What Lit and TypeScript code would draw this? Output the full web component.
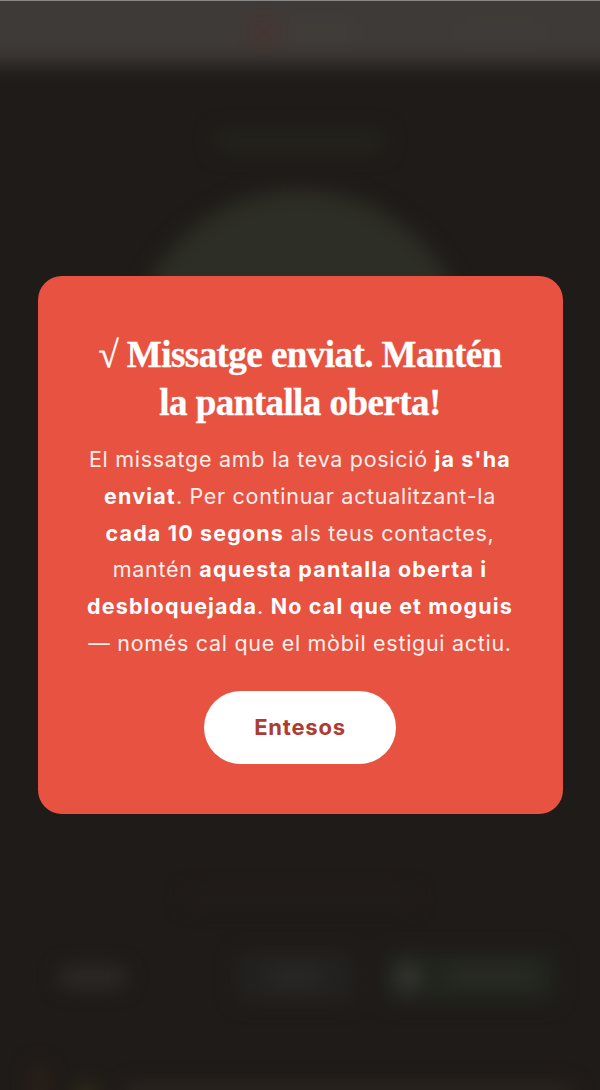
import { LitElement, html, css } from "lit";
import { customElement } from "lit/decorators.js";

@customElement("app-root")
export class AppRoot extends LitElement {
  static styles = css`
    :host {
      display: block;
      position: relative;
      width: 600px;
      height: 1090px;
      overflow: hidden;
      background: #1f1b18;
      font-family: "Inter", "Liberation Sans", sans-serif;
    }
    .backdrop {
      height: 100%;
      display: flex;
      flex-direction: column;
      filter: blur(10px);
    }
    .topbar {
      height: 64px;
      flex: none;
      margin: -20px -30px 0;
      padding: 20px 90px 0 279px;
      background: #3e3a37;
      display: flex;
      align-items: center;
      gap: 6px;
    }
    .logo-dot {
      width: 30px;
      height: 34px;
      border-radius: 50%;
      background: #473533;
    }
    .logo-text {
      width: 70px;
      height: 18px;
      background: #413d39;
    }
    .top-right {
      margin-left: auto;
      width: 80px;
      height: 18px;
      background: #403c38;
    }
    .main {
      flex: 1;
      display: flex;
      flex-direction: column;
      align-items: center;
    }
    .heading {
      margin-top: 66px;
      width: 170px;
      height: 22px;
      border-radius: 4px;
      background: #24231c;
    }
    .dial {
      margin-top: 38px;
      width: 340px;
      height: 340px;
      border-radius: 50%;
      background: #2d2e25;
      flex: none;
    }
    .note {
      margin-top: 362px;
      width: 230px;
      height: 14px;
      background: #211d1a;
    }
    .actions {
      margin-top: 46px;
      box-sizing: border-box;
      width: 100%;
      padding: 0 45px 0 60px;
      display: flex;
      align-items: center;
      gap: 33px;
    }
    .action-label {
      width: 65px;
      height: 20px;
      margin-right: 79px;
      background: #2e2b28;
    }
    .action {
      width: 115px;
      height: 50px;
      background: #232120;
      display: flex;
      align-items: center;
      justify-content: center;
    }
    .action span {
      width: 50px;
      height: 18px;
      background: #2b2926;
    }
    .action.send {
      flex: 1;
      justify-content: flex-start;
      box-sizing: border-box;
      padding-left: 12px;
      background: #21241d;
      gap: 27px;
    }
    .action.send i {
      width: 22px;
      height: 26px;
      border-radius: 50%;
      background: #3a3a35;
    }
    .action.send span {
      width: 90px;
      background: #292c24;
    }
    .footer-row {
      margin-top: 63px;
      align-self: flex-start;
      margin-left: 32px;
      width: 540px;
      display: flex;
      gap: 30px;
      align-items: center;
    }
    .footer-row i {
      width: 14px;
      height: 40px;
      background: #2e211a;
    }
    .footer-row b {
      width: 20px;
      height: 20px;
      margin-top: 20px;
      border-radius: 50%;
      background: #38361c;
    }
    .footer-row span {
      flex: 1;
      height: 20px;
      margin-top: 20px;
      background: #2d2520;
    }
    .overlay {
      position: absolute;
      inset: 0;
      display: flex;
      align-items: center;
      justify-content: center;
      box-shadow: inset 0 1px 0 #8a8886;
    }
    .modal {
      width: 525px;
      height: 538px;
      box-sizing: border-box;
      margin-left: 1px;
      padding: 55px 11px 0 10px;
      background: #e75241;
      border-radius: 24px;
      color: #fff;
      text-align: center;
    }
    h2 {
      margin: 0;
      font-family: "Liberation Serif", serif;
      font-size: 37px;
      line-height: 48px;
      font-weight: 700;
      letter-spacing: -0.55px;
      -webkit-text-stroke: 0.35px #fff;
    }
    p {
      margin: 14px 0 0;
      font-size: 21.5px;
      line-height: 36.8px;
      font-weight: 400;
      letter-spacing: 0.7px;
      color: #fdeeea;
    }
    p b {
      font-weight: 700;
      letter-spacing: 1.15px;
      color: #fff;
    }
    button {
      display: block;
      margin: 29px auto 0;
      width: 192px;
      height: 73px;
      border: 0;
      border-radius: 37px;
      background: #fff;
      color: #ad3c31;
      font-family: inherit;
      font-size: 22px;
      font-weight: 700;
      letter-spacing: 0.8px;
    }
  `;

  render() {
    return html`
      <div class="backdrop">
        <div class="topbar">
          <span class="logo-dot"></span>
          <span class="logo-text"></span>
          <span class="top-right"></span>
        </div>
        <div class="main">
          <div class="heading"></div>
          <div class="dial"></div>
          <div class="note"></div>
          <div class="actions">
            <span class="action-label"></span>
            <div class="action"><span></span></div>
            <div class="action send"><i></i><span></span></div>
          </div>
          <div class="footer-row"><i></i><b></b><span></span></div>
        </div>
      </div>
      <div class="overlay">
        <div class="modal">
          <h2>√ Missatge enviat. Mantén<br />la pantalla oberta!</h2>
          <p>
            El missatge amb la teva posició <b>ja s'ha</b><br />
            <b>enviat</b>. Per continuar actualitzant-la<br />
            <b>cada 10 segons</b> als teus contactes,<br />
            mantén <b>aquesta pantalla oberta i</b><br />
            <b>desbloquejada</b>. <b>No cal que et moguis</b><br />
            — només cal que el mòbil estigui actiu.
          </p>
          <button>Entesos</button>
        </div>
      </div>
    `;
  }
}
